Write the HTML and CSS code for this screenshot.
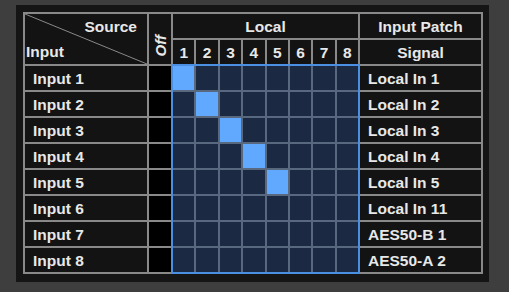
FILE: index.html
```html
<!DOCTYPE html>
<html>
<head>
<meta charset="utf-8">
<link rel="stylesheet" href="styles.css">
</head>
<body>
<div class="panel">
  <div class="patch">
    <div class="corner"><span class="src">Source</span><span class="inp">Input</span></div>
    <div class="off-head"><span>Off</span></div>
    <div class="head">Local</div>
    <div class="head">Input Patch</div>
    <div class="nums">
      <div>1</div><div>2</div><div>3</div><div>4</div><div>5</div><div>6</div><div>7</div><div>8</div>
    </div>
    <div class="head">Signal</div>

    <div class="matrix">
      <div class="on"></div><div></div><div></div><div></div><div></div><div></div><div></div><div></div>
      <div></div><div class="on"></div><div></div><div></div><div></div><div></div><div></div><div></div>
      <div></div><div></div><div class="on"></div><div></div><div></div><div></div><div></div><div></div>
      <div></div><div></div><div></div><div class="on"></div><div></div><div></div><div></div><div></div>
      <div></div><div></div><div></div><div></div><div class="on"></div><div></div><div></div><div></div>
      <div></div><div></div><div></div><div></div><div></div><div></div><div></div><div></div>
      <div></div><div></div><div></div><div></div><div></div><div></div><div></div><div></div>
      <div></div><div></div><div></div><div></div><div></div><div></div><div></div><div></div>
    </div>

    <div class="name">Input 1</div><div class="off"></div><div class="sig">Local In 1</div>
    <div class="name">Input 2</div><div class="off"></div><div class="sig">Local In 2</div>
    <div class="name">Input 3</div><div class="off"></div><div class="sig">Local In 3</div>
    <div class="name">Input 4</div><div class="off"></div><div class="sig">Local In 4</div>
    <div class="name">Input 5</div><div class="off"></div><div class="sig">Local In 5</div>
    <div class="name">Input 6</div><div class="off"></div><div class="sig">Local In 11</div>
    <div class="name">Input 7</div><div class="off"></div><div class="sig">AES50-B 1</div>
    <div class="name">Input 8</div><div class="off"></div><div class="sig">AES50-A 2</div>
  </div>
</div>
</body>
</html>
```

FILE: styles.css
```css
html, body {
  margin: 0;
  padding: 0;
  background: #3e3e3e;
  width: 509px;
  height: 292px;
  overflow: hidden;
}
body {
  padding: 5px 0 0 16px;
  box-sizing: border-box;
  font-family: "Liberation Sans", Arial, sans-serif;
  font-weight: bold;
  font-size: 15.5px;
  color: #e8e8e8;
}
.panel {
  width: 473px;
  height: 277px;
  background: #151515;
  padding: 7px 0 0 7px;
  box-sizing: border-box;
}
.patch {
  display: grid;
  grid-template-columns: 122px 22px 185px 121px;
  grid-template-rows: repeat(10, 24px);
  gap: 2px;
  padding: 2px;
  background: #898989;
  width: max-content;
}
.patch > div {
  background: #131313;
  display: flex;
  align-items: center;
  line-height: 17px;
  white-space: nowrap;
}
.patch > .corner {
  grid-row: span 2;
  display: grid;
  grid-template-rows: 1fr 1fr;
  align-items: stretch;
  background: #131313 linear-gradient(to top right, transparent calc(50% - 0.9px), #8a8a8a 50%, transparent calc(50% + 0.9px));
}
.corner span {
  display: flex;
  align-items: center;
}
.corner .src {
  justify-content: flex-end;
  padding-right: 10px;
}
.corner .inp {
  padding-left: 1px;
}
.patch > .off-head {
  grid-row: span 2;
  justify-content: center;
  align-items: flex-end;
  padding-bottom: 8px;
}
.off-head span {
  writing-mode: vertical-rl;
  transform: rotate(180deg);
  font-style: italic;
  font-size: 15px;
  line-height: 15px;
}
.patch > .head {
  justify-content: center;
}
.patch > .nums {
  display: grid;
  grid-template-columns: repeat(8, 1fr);
  grid-template-rows: 1fr;
  align-items: stretch;
  gap: 2px;
  background: #898989;
}
.nums div {
  background: #131313;
  display: flex;
  align-items: center;
  justify-content: center;
}
.patch > .matrix {
  grid-area: 3 / 3 / 11 / 4;
  display: grid;
  grid-template-columns: repeat(8, 1fr);
  grid-template-rows: repeat(8, 24px);
  align-items: stretch;
  gap: 2px;
  background: #58697f;
  outline: 2px solid #4a8fe2;
}
.matrix div {
  background: #1b2a42;
}
.matrix div.on {
  background: #60a9ff;
}
.patch > .name {
  padding-left: 8px;
}
.patch > .off {
  background: #000;
}
.patch > .sig {
  padding-left: 8px;
}
```
